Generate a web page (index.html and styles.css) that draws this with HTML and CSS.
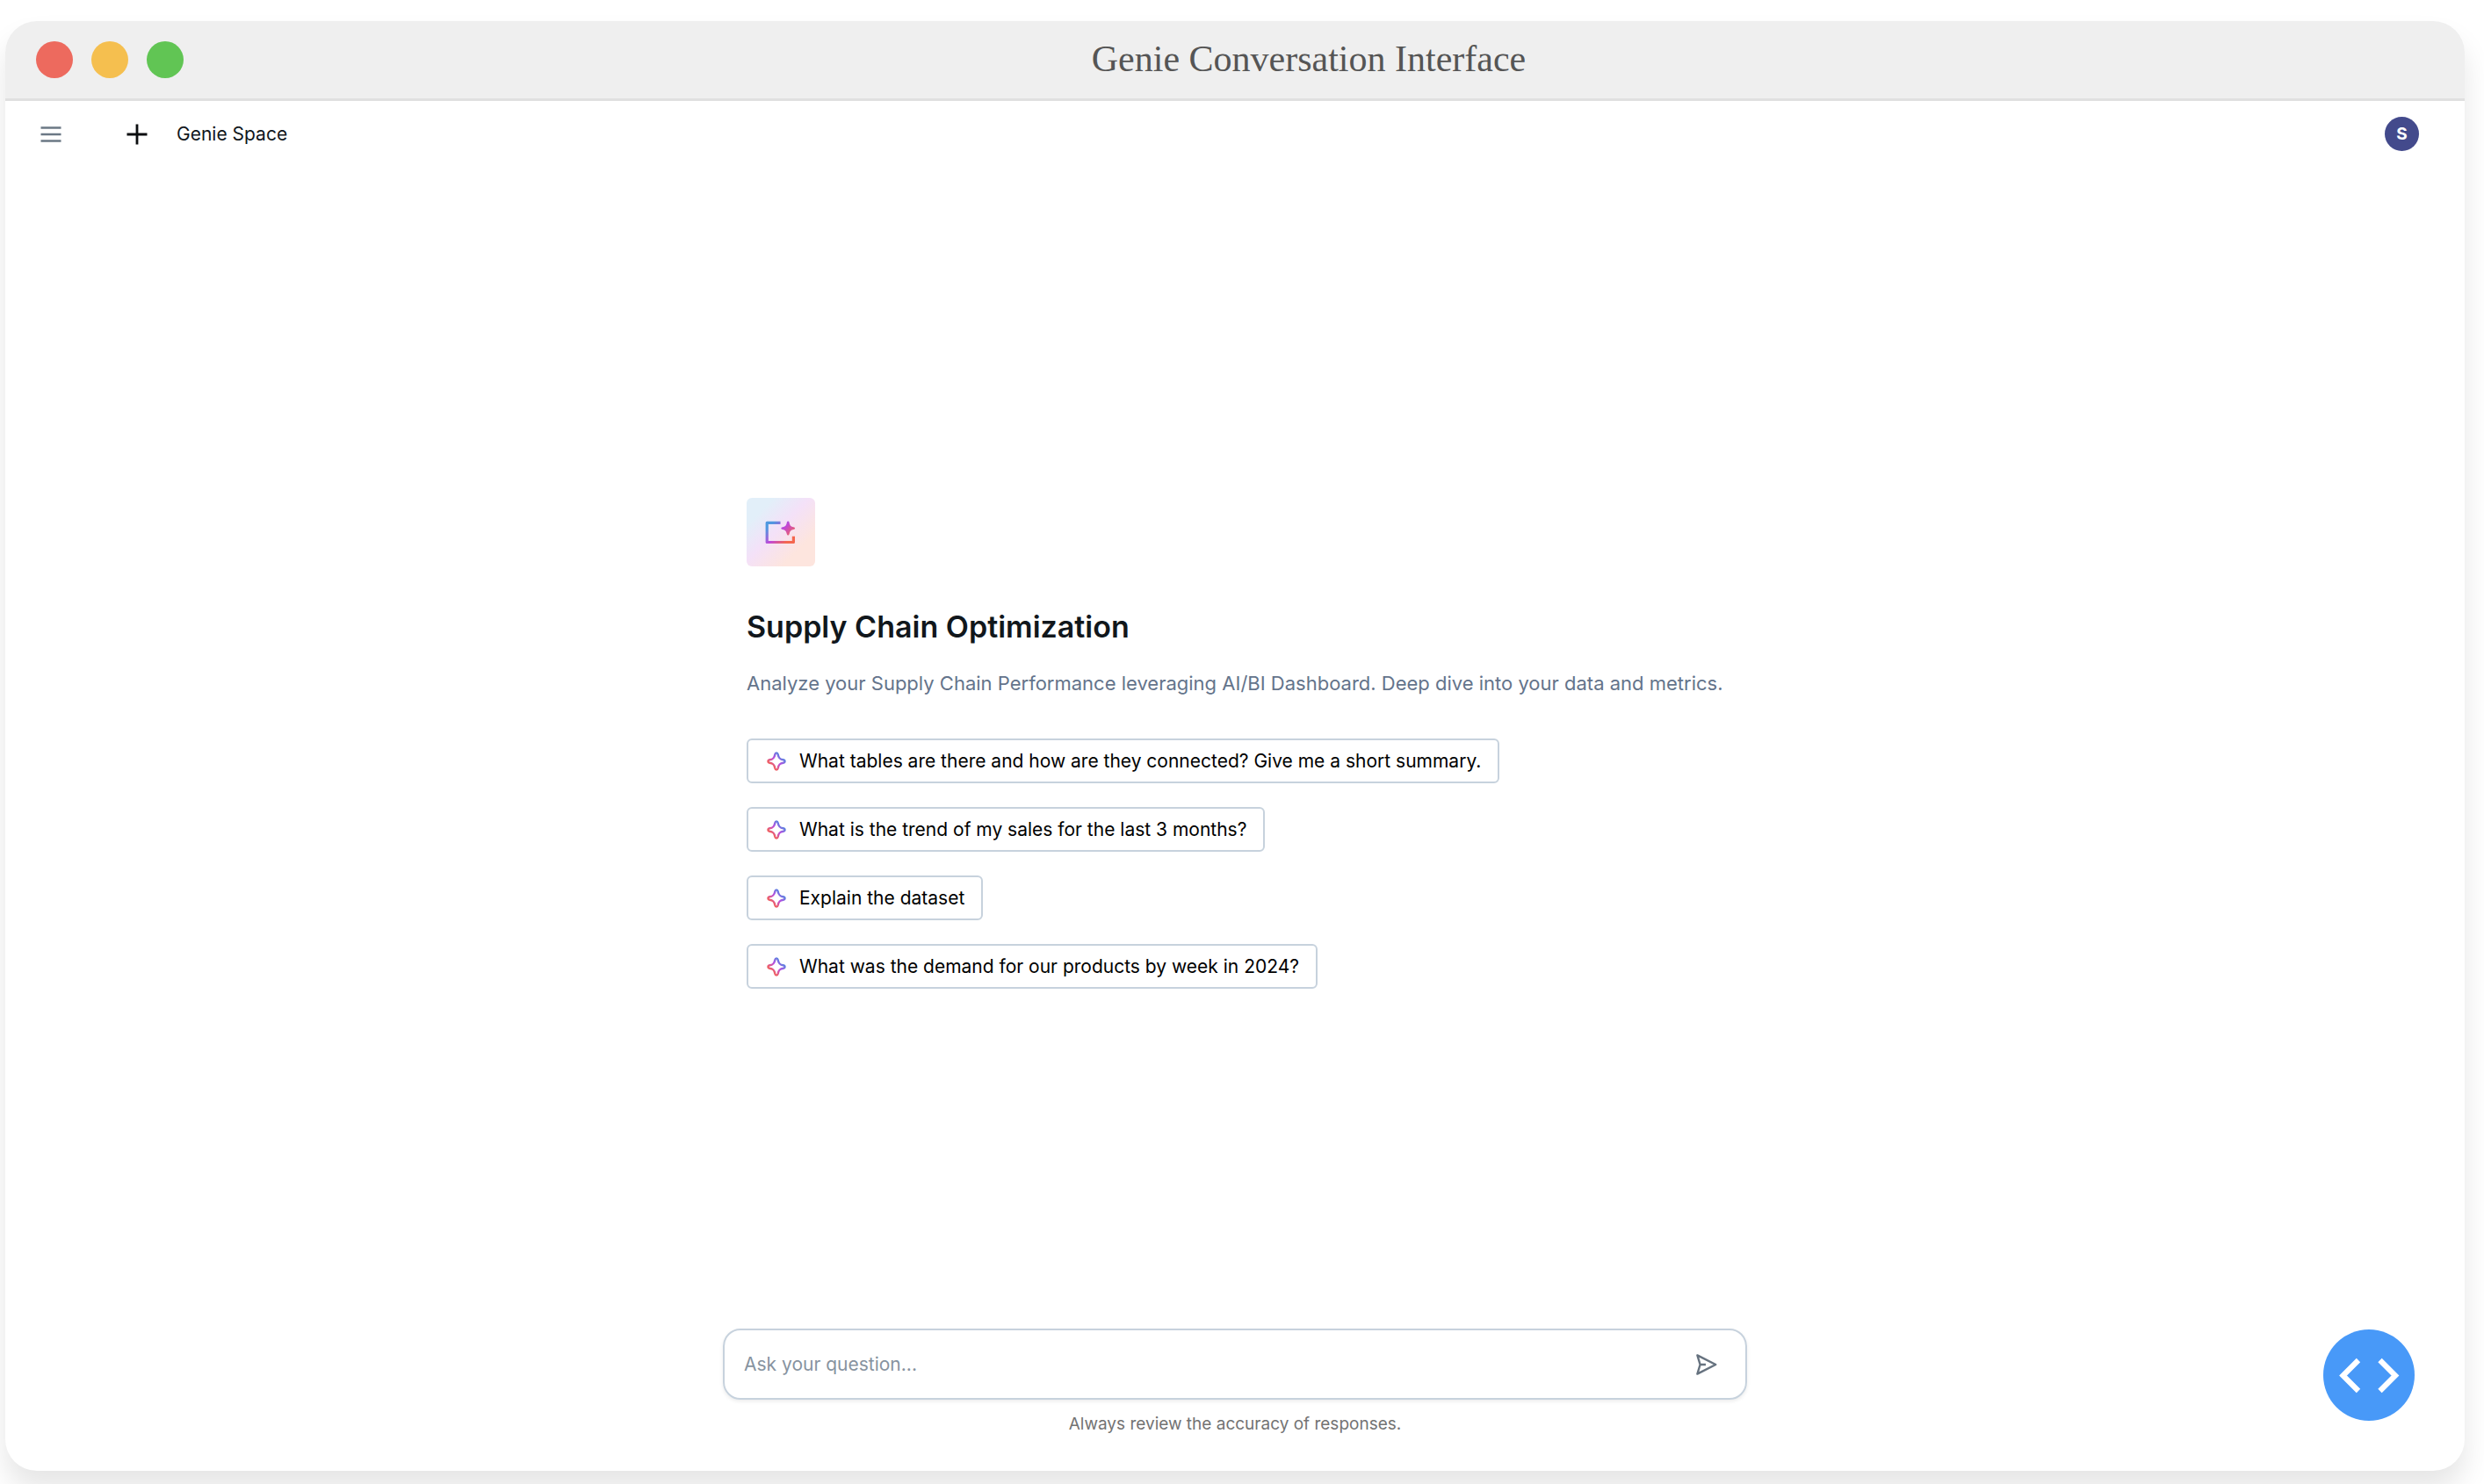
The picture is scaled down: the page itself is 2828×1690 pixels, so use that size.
FILE: index.html
```html
<!DOCTYPE html>
<html lang="en">
<head>
  <meta charset="utf-8">
  <meta name="viewport" content="width=device-width, initial-scale=1">
  <title>Genie Conversation Interface</title>
  <link rel="stylesheet" href="styles.css">
</head>
<body>
  <svg class="defs" width="0" height="0" aria-hidden="true">
    <defs>
      <linearGradient id="spark-gradient" x1="22" y1="4" x2="5" y2="21" gradientUnits="userSpaceOnUse">
        <stop offset="0.2" stop-color="#5a82e0"/>
        <stop offset="0.5" stop-color="#b84fe0"/>
        <stop offset="0.8" stop-color="#ee5f66"/>
      </linearGradient>
      <symbol id="spark" viewBox="0 0 26 26">
        <path d="M13 3.4C14 3.4 14.5 4.2 14.7 5.2C15.4 9.2 16.8 10.6 20.8 11.3C21.8 11.5 22.6 12 22.6 13C22.6 14 21.8 14.5 20.8 14.7C16.8 15.4 15.4 16.8 14.7 20.8C14.5 21.8 14 22.6 13 22.6C12 22.6 11.5 21.8 11.3 20.8C10.6 16.8 9.2 15.4 5.2 14.7C4.2 14.5 3.4 14 3.4 13C3.4 12 4.2 11.5 5.2 11.3C9.2 10.6 10.6 9.2 11.3 5.2C11.5 4.2 12 3.4 13 3.4Z" fill="none" stroke="url(#spark-gradient)" stroke-width="2.4" stroke-linejoin="round"/>
      </symbol>
    </defs>
  </svg>

  <div class="window">
    <header class="titlebar">
      <div class="lights">
        <span class="light light-close"></span>
        <span class="light light-minimize"></span>
        <span class="light light-zoom"></span>
      </div>
      <div class="window-title">Genie Conversation Interface</div>
    </header>

    <nav class="topbar">
      <button class="icon-button menu-button" type="button" aria-label="Menu">
        <svg width="26" height="26" viewBox="0 0 26 26"><path d="M1.5 5.5h23M1.5 13h23M1.5 20.5h23" stroke="#6b7885" stroke-width="2.6"/></svg>
      </button>
      <button class="icon-button" type="button" aria-label="New chat">
        <svg width="26" height="26" viewBox="0 0 26 26"><path d="M13 1.5v23M1.5 13h23" stroke="#0b0d0f" stroke-width="2.8"/></svg>
      </button>
      <a class="space-name" href="#">Genie Space</a>
      <button class="avatar" type="button">S</button>
    </nav>

    <main class="intro">
      <div class="intro-column">
        <div class="tile">
          <svg width="39" height="39" viewBox="0 0 39 39" aria-hidden="true">
            <defs>
              <linearGradient id="tile-gradient" x1="4" y1="6" x2="31" y2="33" gradientUnits="userSpaceOnUse">
                <stop offset="0.15" stop-color="#4f98e0"/>
                <stop offset="0.5" stop-color="#c148d8"/>
                <stop offset="0.85" stop-color="#f4674f"/>
              </linearGradient>
            </defs>
            <path d="M18.500 8.400H3.200V30.500H33.400V23.700" fill="none" stroke="url(#tile-gradient)" stroke-width="3.200" stroke-linejoin="round"/>
            <path d="M27.2 6.6C28.1 6.6 28.4 7.3 28.7 8.4C29.5 11.7 30.4 12.5 33.4 13.2C34.5 13.5 35.1 13.8 35.1 14.6C35.1 15.4 34.5 15.8 33.4 16C30.4 16.7 29.5 17.6 28.7 20.8C28.4 21.9 28.1 22.6 27.2 22.6C26.3 22.6 26 21.9 25.7 20.8C24.9 17.6 24 16.7 21 16C19.900 15.800 19.300 15.400 19.300 14.600C19.300 13.800 19.900 13.500 21 13.200C24 12.500 24.900 11.700 25.700 8.400C26 7.300 26.300 6.600 27.200 6.600Z" fill="url(#tile-gradient)"/>
          </svg>
        </div>
        <h1 class="heading">Supply Chain Optimization</h1>
        <p class="description">Analyze your Supply Chain Performance leveraging AI/BI Dashboard. Deep dive into your data and metrics.</p>
        <div class="suggestions">
          <button class="suggestion" type="button"><svg width="26" height="26" aria-hidden="true"><use href="#spark"/></svg>What tables are there and how are they connected? Give me a short summary.</button>
          <button class="suggestion" type="button"><svg width="26" height="26" aria-hidden="true"><use href="#spark"/></svg>What is the trend of my sales for the last 3 months?</button>
          <button class="suggestion" type="button"><svg width="26" height="26" aria-hidden="true"><use href="#spark"/></svg>Explain the dataset</button>
          <button class="suggestion" type="button"><svg width="26" height="26" aria-hidden="true"><use href="#spark"/></svg>What was the demand for our products by week in 2024?</button>
        </div>
      </div>
    </main>

    <footer class="footer">
      <form class="composer">
        <input class="question" type="text" placeholder="Ask your question..." aria-label="Ask your question">
        <button class="icon-button" type="button" aria-label="Send">
          <svg width="26" height="26" viewBox="0 0 26 26"><path d="M2.4 2.4L23.3 13L2.4 23.6L5.6 13ZM5.6 13H12" fill="none" stroke="#66727f" stroke-width="2.4" stroke-linejoin="round"/></svg>
        </button>
      </form>
      <p class="note">Always review the accuracy of responses.</p>
    </footer>

    <button class="code-button" type="button" aria-label="View code">
      <svg width="104" height="104" viewBox="0 0 104 104"><path d="M40 35L22.5 52.5L40 70M64.5 35L82 52.5L64.5 70" fill="none" stroke="#fff" stroke-width="6.2"/></svg>
    </button>
  </div>
</body>
</html>
```
FILE: styles.css
```css
* {
  box-sizing: border-box;
}

body {
  margin: 0;
  min-height: 100vh;
  display: flex;
  padding: 24px 22px 15px 6px;
  background: #fff;
  color: #11171c;
  font: 21px/32px Inter, "Liberation Sans", sans-serif;
}

button,
input {
  font: inherit;
  color: inherit;
  margin: 0;
  padding: 0;
  border: 0;
  background: none;
}

.defs {
  position: absolute;
}

.window {
  position: relative;
  flex: 1;
  min-width: 0;
  display: flex;
  flex-direction: column;
  border-radius: 36px;
  background: #fff;
  box-shadow: 0 21px 32px rgba(0, 0, 0, 0.1);
}

.titlebar {
  display: flex;
  align-items: center;
  height: 91px;
  padding: 0 35px;
  border-bottom: 3px solid #e0e0e0;
  border-radius: 36px 36px 0 0;
  background: #efefef;
}

.lights {
  display: flex;
  gap: 21px;
}

.light {
  width: 42px;
  height: 42px;
  border-radius: 50%;
}

.light-close {
  background: #ed6a5e;
}

.light-minimize {
  background: #f5bf4f;
}

.light-zoom {
  background: #61c554;
}

.window-title {
  flex: 1;
  padding-bottom: 2px;
  text-align: center;
  color: #555;
  font: 42px/48px "Liberation Serif", serif;
}

.topbar {
  display: flex;
  align-items: center;
  padding: 18px 52px 8px 39px;
}

.icon-button {
  display: flex;
}

.menu-button {
  margin-right: 72px;
}

.space-name {
  margin-left: 32px;
  color: inherit;
  text-decoration: none;
}

.avatar {
  width: 39px;
  height: 39px;
  margin-left: auto;
  border-radius: 50%;
  background: #434a8c;
  color: #fff;
  font-size: 19px;
  font-weight: 700;
}

.intro {
  flex: 1;
  display: flex;
  flex-direction: column;
  justify-content: center;
  align-items: center;
}

.intro-column {
  width: 100%;
  max-width: 1112px;
}

.tile {
  display: flex;
  align-items: center;
  justify-content: center;
  width: 78px;
  height: 78px;
  border-radius: 6px;
  background: linear-gradient(135deg, #e2eff9 20%, #f4e1f8 46%, #fde5de 76%);
}

.heading {
  margin: 43px 0 0;
  font-size: 34px;
  font-weight: 600;
  line-height: 52px;
}

.description {
  margin: 22px 0 0;
  color: #64748b;
  font-size: 22px;
}

.suggestions {
  display: flex;
  flex-direction: column;
  align-items: flex-start;
  gap: 27px;
  margin-top: 47px;
}

.suggestion {
  display: flex;
  align-items: center;
  gap: 13px;
  min-height: 51px;
  padding: 0 19px;
  border: 2px solid #c7d2dd;
  border-radius: 6px;
  color: #000;
  text-align: left;
}

.footer {
  display: flex;
  flex-direction: column;
  align-items: center;
  padding-bottom: 37px;
}

.composer {
  display: flex;
  align-items: center;
  width: 100%;
  max-width: 1166px;
  height: 81px;
  padding: 0 31px 0 22px;
  border: 2px solid #c7d2dd;
  border-radius: 20px;
  box-shadow: 0 2px 4px rgba(0, 0, 0, 0.08);
}

.question {
  flex: 1;
  min-width: 0;
}

.question::placeholder {
  color: #8793a0;
  opacity: 1;
}

.note {
  margin: 12px 0 0;
  color: #737373;
  font-size: 19px;
}

.code-button {
  position: absolute;
  right: 57px;
  bottom: 57px;
  display: flex;
  border-radius: 50%;
  background: #4899f8;
}
```
